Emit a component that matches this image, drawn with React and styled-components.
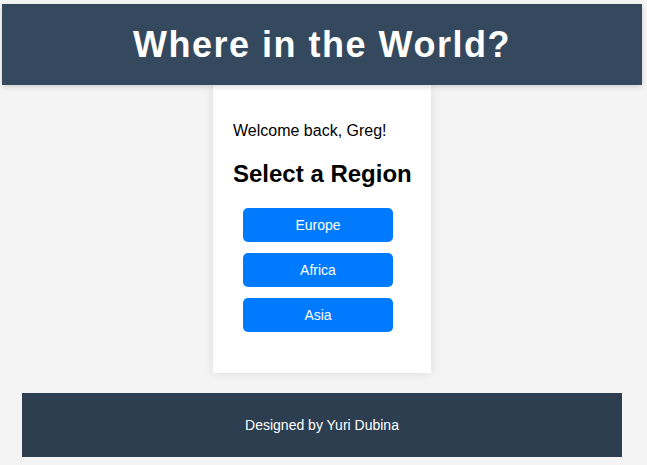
import React from "react";
import styled, { createGlobalStyle } from "styled-components";

const Global = createGlobalStyle`
  html, body { margin: 0; padding: 0; background: #f4f4f4; }
  body { font-family: "Liberation Sans", Arial, sans-serif; }
`;

const Page = styled.div`
  width: 640px;
  margin: 4px 0 0 2px;
  display: flex;
  flex-direction: column;
  align-items: center;
`;

const Header = styled.header`
  align-self: stretch;
  background: #34495e;
  box-shadow: 0 2px 5px rgba(0, 0, 0, 0.15);
  padding: 20px 0;
  text-align: center;
  position: relative;
  z-index: 1;
`;

const Title = styled.h1`
  margin: 0;
  color: #ffffff;
  font-size: 36px;
  line-height: 41px;
  font-weight: 700;
  letter-spacing: 1.5px;
`;

const Card = styled.main`
  background: #ffffff;
  box-shadow: 0 0 10px rgba(0, 0, 0, 0.1);
  padding: 20px;
  width: 178px;
`;

const Welcome = styled.p`
  margin: 17px 0 0;
  font-size: 16px;
  line-height: 18px;
  color: #000;
`;

const Heading = styled.h2`
  margin: 20px 0;
  font-size: 24px;
  line-height: 28px;
  font-weight: 700;
  color: #000;
  white-space: nowrap;
`;

const Buttons = styled.div`
  display: flex;
  flex-direction: column;
  gap: 11px;
  padding: 0 0 0 10px;
  margin-bottom: 21px;
`;

const RegionButton = styled.button`
  width: 150px;
  height: 34px;
  border: none;
  border-radius: 5px;
  background: #007bff;
  color: #ffffff;
  font-family: "Liberation Sans", Arial, sans-serif;
  font-size: 14px;
  cursor: pointer;
`;

const Footer = styled.footer`
  margin-top: 20px;
  width: 600px;
  background: #2c3e50;
  color: #ffffff;
  text-align: center;
  padding: 24px 0;
  font-size: 14px;
  line-height: 16px;
`;

export default function App() {
  return (
    <>
      <Global />
      <Page>
        <Header>
          <Title>Where in the World?</Title>
        </Header>
        <Card>
          <Welcome>Welcome back, Greg!</Welcome>
          <Heading>Select a Region</Heading>
          <Buttons>
            {["Europe", "Africa", "Asia"].map((r) => (
              <RegionButton key={r}>{r}</RegionButton>
            ))}
          </Buttons>
        </Card>
        <Footer>Designed by Yuri Dubina</Footer>
      </Page>
    </>
  );
}
